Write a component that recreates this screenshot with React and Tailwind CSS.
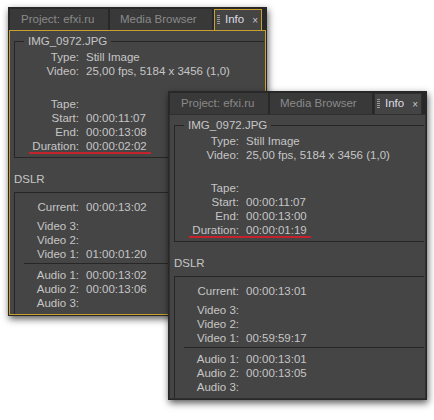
import React from "react";

const font = { fontFamily: '"Liberation Sans", Arial, sans-serif' };

function Gripper() {
  return (
    <svg width="3" height="10" viewBox="0 0 3 10" className="shrink-0">
      {[0, 2, 4, 6, 8].map((y) => (
        <rect key={y} x="0" y={y} width="3" height="1" fill="#9a9a9a" />
      ))}
    </svg>
  );
}

function Row({ label, value, underline }) {
  return (
    <div className="relative flex h-[14px] items-center leading-[14px]">
      <span className="w-[64px] text-right">{label}</span>
      <span className="ml-[7px] whitespace-nowrap">{value}</span>
      {underline && (
        <div className="absolute left-[14px] top-[13px] h-[2px] w-[122px] bg-[#c4232b]" />
      )}
    </div>
  );
}

function Panel({ focused, d }) {
  return (
    <div className="flex h-[309px] w-[259px] flex-col bg-[#282828] px-[1px] pt-[2px] pb-[1px] shadow-[1px_3px_7px_rgba(0,0,0,0.65)]">
      {/* tabs */}
      <div className="flex h-[21px] shrink-0 gap-[2px] pl-[1px] text-[11.5px]">
        <div className="flex w-[98px] items-center bg-[#393939] pl-[11px] text-[#8a8a8a]">
          Project: efxi.ru
        </div>
        <div className="flex w-[102px] items-center bg-[#393939] pl-[10px] text-[#8a8a8a]">
          Media Browser
        </div>
        <div
          className={
            "flex w-[48px] items-center border-x border-t pl-[2px] " +
            (focused ? "border-[#c9a030] bg-[#444444]" : "border-[#2e2e2e] bg-[#444444]")
          }
        >
          <Gripper />
          <span className="ml-[5px] text-[#dcdce6]">Info</span>
          <span className="ml-[8px] text-[10px] text-[#c8c8c8]">×</span>
        </div>
      </div>
      {/* body */}
      <div
        className={
          "flex flex-1 flex-col overflow-hidden border bg-[#454545] pr-[1px] text-[11.5px] text-[#c6c6c6] " +
          (focused ? "border-[#c9a030]" : "border-[#303030]")
        }
      >
        <fieldset className="mt-[3px] ml-[4px] border border-r-0 border-[#262626] pb-[4px]">
          <legend className="ml-[9px] px-[4px] leading-[14px]">IMG_0972.JPG</legend>
          <div className="pt-[2px]">
            <Row label="Type:" value="Still Image" />
            <Row label="Video:" value="25,00 fps, 5184 x 3456 (1,0)" />
          </div>
          <div className="mt-[19px]">
            <Row label="Tape:" value="" />
            <Row label="Start:" value={d.start} />
            <Row label="End:" value={d.end} />
            <Row label="Duration:" value={d.duration} underline />
          </div>
        </fieldset>
        <div className="mt-[14px] ml-[4px] leading-[14px]">DSLR</div>
        <div className="mt-[6px] ml-[4px] flex-1 border-t border-l border-[#262626] pt-[7px]">
          <Row label="Current:" value={d.current} />
          <div className="mt-[5px]">
            <Row label="Video 3:" value="" />
            <Row label="Video 2:" value="" />
            <Row label="Video 1:" value={d.video1} />
          </div>
          <div className="mt-[2px] ml-[9px] h-[1px] bg-[#262626]" />
          <div className="mt-[4px]">
            <Row label="Audio 1:" value={d.audio1} />
            <Row label="Audio 2:" value={d.audio2} />
            <Row label="Audio 3:" value="" />
          </div>
        </div>
      </div>
    </div>
  );
}

export default function App() {
  const a = {
    start: "00:00:11:07",
    end: "00:00:13:08",
    duration: "00:00:02:02",
    current: "00:00:13:02",
    video1: "01:00:01:20",
    audio1: "00:00:13:02",
    audio2: "00:00:13:06",
  };
  const b = {
    start: "00:00:11:07",
    end: "00:00:13:00",
    duration: "00:00:01:19",
    current: "00:00:13:01",
    video1: "00:59:59:17",
    audio1: "00:00:13:01",
    audio2: "00:00:13:05",
  };
  return (
    <div className="relative h-[420px] w-[434px] overflow-hidden bg-white" style={font}>
      <div className="absolute left-[8px] top-[7px]">
        <Panel focused d={a} />
      </div>
      <div className="absolute left-[168px] top-[91px]">
        <Panel d={b} />
      </div>
    </div>
  );
}
